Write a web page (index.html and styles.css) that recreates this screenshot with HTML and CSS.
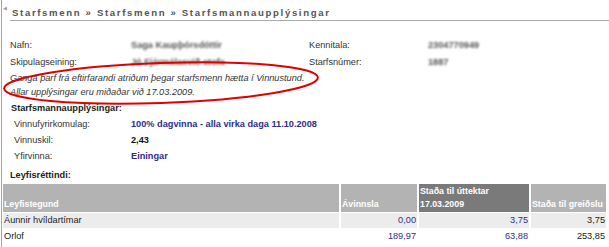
FILE: index.html
```html
<!DOCTYPE html>
<html lang="is">
<head>
    <meta charset="UTF-8">
    <title>Starfsmannaupplýsingar</title>
    <link rel="stylesheet" href="styles.css">
</head>
<body>
    <div class="page">
        <span class="back">&#9664;</span>
        <div class="crumb">Starfsmenn &raquo; Starfsmenn &raquo; Starfsmannaupplýsingar</div>

        <div class="info">
            <span>Nafn:</span>
            <span class="blur">Saga Kaupþórsdóttir</span>
            <span>Kennitala:</span>
            <span class="blur">2304770949</span>
            <span>Skipulagseining:</span>
            <span class="blur">Jó Fjármálasvið stofa</span>
            <span>Starfsnúmer:</span>
            <span class="blur">1887</span>
        </div>

        <div class="note">
            Ganga þarf frá eftirfarandi atriðum þegar starfsmenn hætta í Vinnustund.<br>
            Allar upplýsingar eru miðaðar við 17.03.2009.
        </div>

        <!-- merking utan um athugasemdina -->
        <svg class="circle" width="330" height="50" viewBox="0 0 330 50">
            <ellipse cx="159" cy="24" rx="157" ry="20" transform="rotate(-2 159 24)" fill="none" stroke="#e10000" stroke-width="2"/>
        </svg>

        <div class="title first">Starfsmannaupplýsingar:</div>
        <div class="details">
            <span>Vinnufyrirkomulag:</span>
            <span class="val blue">100% dagvinna - alla virka daga 11.10.2008</span>
            <span>Vinnuskil:</span>
            <span class="val">2,43</span>
            <span>Yfirvinna:</span>
            <span class="val blue">Einingar</span>
        </div>

        <div class="title">Leyfisréttindi:</div>
        <table class="leyfi">
            <thead>
                <tr>
                    <th class="c1">Leyfistegund</th>
                    <th class="c2">Ávinnsla</th>
                    <th class="c3 dark">Staða til úttektar<br>17.03.2009</th>
                    <th class="c4">Staða til greiðslu</th>
                </tr>
            </thead>
            <tbody>
                <tr class="odd">
                    <td>Áunnir hvíldartímar</td>
                    <td class="num blue">0,00</td>
                    <td class="num blue">3,75</td>
                    <td class="num">3,75</td>
                </tr>
                <tr>
                    <td>Orlof</td>
                    <td class="num blue">189,97</td>
                    <td class="num blue">63,88</td>
                    <td class="num">253,85</td>
                </tr>
            </tbody>
        </table>
    </div>
</body>
</html>
```

FILE: styles.css
```css
body {
    margin: 0;
    font-family: "Liberation Sans", Arial, sans-serif;
    font-size: 9.2px;
    color: #333;
    background: #fff;
}

.page {
    position: relative;
    margin-left: 1px;
    height: 247px;
    border-left: 1px solid #a4a4a4;
    overflow: hidden;
}

.back {
    position: absolute;
    left: 1px;
    top: 5px;
    font-size: 5px;
    color: #999;
}

.crumb {
    margin-left: 8px;
    padding: 7px 0 1px 2px;
    line-height: 12px;
    font-size: 9.6px;
    font-weight: bold;
    letter-spacing: 1.65px;
    color: #555;
    border-bottom: 1px solid #aaa;
}

.info {
    display: grid;
    grid-template-columns: 121px 178px 119px 1fr;
    margin-top: 16px;
    padding-left: 8px;
    line-height: 17px;
}

.blur {
    display: inline-block;
    color: #555;
    font-weight: bold;
    filter: blur(1.1px);
}

.note {
    padding-left: 8px;
    line-height: 14px;
    font-style: italic;
}

.circle {
    position: absolute;
    left: 0;
    top: 59px;
}

.title {
    margin-top: 3px;
    padding-left: 8px;
    line-height: 16px;
    font-weight: bold;
    color: #222;
}

.title.first {
    margin-top: 1px;
    padding-left: 9px;
}

.details {
    display: grid;
    grid-template-columns: 117px 1fr;
    padding-left: 12px;
    line-height: 16px;
}

.val {
    font-weight: bold;
    color: #111;
}

.blue {
    color: #2e2e8c;
}

.leyfi {
    margin-left: -1px;
    border-collapse: separate;
    border-spacing: 2px 1px;
    font-size: 9.2px;
}

.leyfi th {
    height: 26px;
    padding: 1px 1px;
    background: #b3b3b3;
    color: #fff;
    font-size: 8.8px;
    text-align: left;
    vertical-align: bottom;
    line-height: 13px;
    white-space: nowrap;
}

.leyfi th.dark {
    background: #7a7a7a;
}

.leyfi .c1 { width: 334px; }
.leyfi .c2 { width: 74px; }
.leyfi .c3 { width: 108px; }
.leyfi .c4 { width: 73px; }

.leyfi td {
    height: 15px;
    padding: 0 1px;
    line-height: 15px;
    color: #222;
}

.leyfi tr.odd td {
    background: #ececec;
}

.leyfi td.num {
    text-align: right;
}

.leyfi td.num.blue {
    color: #2e2e8c;
}
```
